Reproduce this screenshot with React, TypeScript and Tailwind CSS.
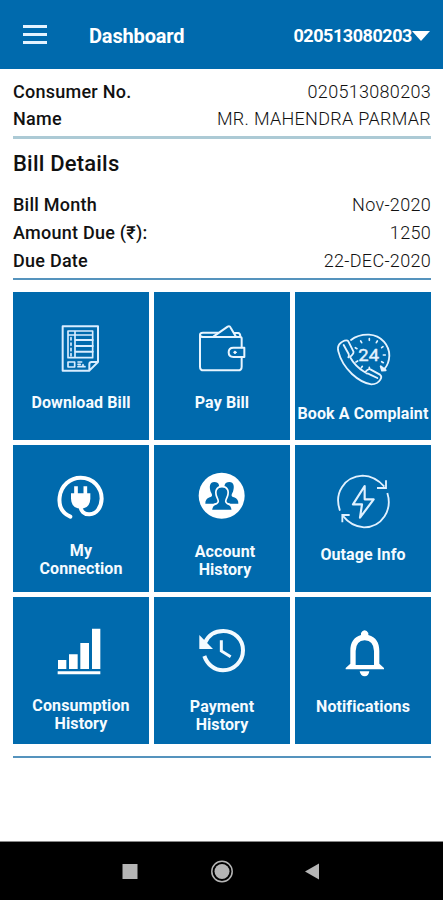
import React from "react";

type Tile = { lines: string[]; top: string; view: string; icon: React.ReactNode };

const stroke = { fill: "none", stroke: "#fff", strokeLinecap: "round", strokeLinejoin: "round" } as const;

const BillIcon = () => (
  <g {...stroke} strokeWidth={6} stroke="#d9edff">
    <path d="M158 115H264V222L238 248H158ZM264 222H245Q238 222 238 229V248" />
    <path d="M174 129H248V209H174ZM195 129V209M174 141H248" strokeWidth={5} />
    <path d="M197 156H248M197 174H248M197 191H248" strokeWidth={6} />
    <path d="M183 149V205" strokeWidth={5} strokeDasharray="7 9" />
    <path d="M174 222H194V237H174ZM204 222H215M204 229H211M204 236H225M219 230V236" strokeWidth={5} />
  </g>
);

const WalletIcon = () => (
  <g {...stroke} strokeWidth={6} stroke="#e8f5ff">
    <path d="M274 178V151Q274 147 268 147H160Q149 147 149 140Q149 134 158 134H203M149 140V236Q149 247 160 247H263Q274 247 274 236V207" />
    <path d="M190 145L232 116Q238 113 241 119L256 145M252 135H264Q270 136 270 146" />
    <path d="M282 179H249Q235 179 235 193Q235 207 249 207H282Z" />
    <circle cx="254" cy="193" r="3.5" fill="#fff" strokeWidth={3} />
  </g>
);

const SupportIcon = () => (
  <g {...stroke} strokeWidth={5.5} stroke="#e4f3ff">
    <path d="M178 156Q199 139 232 140C270 142 293 173 293 203Q292 226 279 242" />
    <path d="M267 235L271 248L282 247Z" fill="#e4f3ff" />
    <path d="M233 152V157M257 159L254 164M274 176L270 179M281 201H275M275 224L270 221M207 159L210 164M191 179L196 182M209 239L212 235M193 222L198 219M233 238V242" strokeWidth={5} />
    <path d="M164 157Q153 157 142 170Q137 177 140 190Q149 227 181 258Q210 285 239 289Q258 289 266 275Q272 265 265 260L236 244Q229 241 220 253Q190 235 175 207Q190 195 184 188L170 160Q168 157 164 157Z" />
    <path d="M156 171L171 198Q173 204 170 208M224 256Q229 256 234 259L257 270" />
    <text x="231" y="219" textAnchor="middle" fontSize="51" fill="#e4f3ff" stroke="#e4f3ff" strokeWidth="1.2" textLength="62" lengthAdjust="spacingAndGlyphs">24</text>
  </g>
);

const PlugIcon = () => (
  <g {...stroke}>
    <path d="M181 228C154 216 146 193 149 169C153 135 181 111 212 111C250 111 275 141 275 174C274 200 260 220 239 221C222 222 213 211 211 197" strokeWidth={12} />
    <path d="M198 137V164M226 137V164" strokeWidth={11} strokeLinecap="butt" />
    <path d="M183 158H241V174Q240 198 221 203H203Q184 198 183 174Z" fill="#fff" stroke="none" />
  </g>
);

const PeopleIcon = () => (
  <g>
    <circle cx="214" cy="165" r="69" fill="#fff" />
    <g fill="#006aad">
      <path d="M192 124C208 124 208 137 205 151C200 162 199 166 208 172L203 189H165Q164 175 178 170C188 167 186 162 181 153C176 138 178 124 192 124Z" />
      <path d="M237 124C221 124 221 137 224 151C229 162 230 166 221 172L226 189H264Q265 175 251 170C241 167 243 162 248 153C253 138 251 124 237 124Z" />
      <path stroke="#fff" strokeWidth="5" d="M215 138C232 138 237 151 231 168C225 181 224 184 231 189Q246 192 246 210H183Q183 192 199 189C206 184 205 181 199 168C193 151 198 138 215 138Z" />
    </g>
  </g>
);

const OutageIcon = () => (
  <g {...stroke} strokeWidth={5.5} stroke="#e0f1ff" strokeLinecap="butt" strokeLinejoin="miter">
    <path d="M145 210C126 157 158 108 213 105Q250 106 278 138" />
    <path d="M283 119V142H256" />
    <path d="M287 157C303 208 271 260 217 260Q179 258 153 225" />
    <path d="M152 245V223H174" />
    <path d="M219 136L184 191H211L205 231L246 176H219Z" strokeWidth={6.5} strokeLinejoin="round" />
  </g>
);

const BarsIcon = () => (
  <path fill="#fff" d="M144 203H169V230H144ZM177 186H203V230H177ZM211 152H237V230H211ZM246 109H271V230H246ZM143 237H271V246H143Z" />
);

const ClockBackIcon = () => (
  <g fill="none" stroke="#f2faff">
    <path d="M162 191C171 217 193 234 218 234C252 234 278 207 278 174C278 141 252 116 219 116C193 116 174 129 164 151" strokeWidth={12} />
    <path d="M147 128V170H188Z" fill="#f2faff" stroke="none" />
    <path d="M213 144V176L241 193" strokeWidth={9} />
  </g>
);

const BellIcon = () => (
  <g fill="#fff">
    <path fillRule="evenodd" d="M208 128V122Q212 114 219 114Q226 114 230 122V128C253 134 263 151 263 176V214L277 227V231H162V227L176 214V176C176 151 186 134 208 128ZM192 218H247V176Q246 145 219 144Q193 145 192 176Z" />
    <path d="M204 237H233Q231 252 219 252Q207 252 204 237Z" />
  </g>
);

const tiles: Tile[] = [
  { lines: ["Download Bill"], top: "mt-[11.500px]", view: "9 12 408 270", icon: <BillIcon /> },
  { lines: ["Pay Bill"], top: "mt-[11.500px]", view: "11 12 408 270", icon: <WalletIcon /> },
  { lines: ["Book A Complaint"], top: "mt-[22.500px]", view: "10 12 408 270", icon: <SupportIcon /> },
  { lines: ["My", "Connection"], top: "mt-[7px]", view: "9 13 408 270", icon: <PlugIcon /> },
  { lines: ["Account", "History"], top: "mt-[8px] pl-[6px]", view: "11 13 408 270", icon: <PeopleIcon /> },
  { lines: ["Outage Info"], top: "mt-[11px]", view: "10 13 408 270", icon: <OutageIcon /> },
  { lines: ["Consumption", "History"], top: "mt-[10px]", view: "9 14 408 270", icon: <BarsIcon /> },
  { lines: ["Payment", "History"], top: "mt-[11px]", view: "11 14 408 270", icon: <ClockBackIcon /> },
  { lines: ["Notifications"], top: "mt-[11px]", view: "10 14 408 270", icon: <BellIcon /> },
];

const Row = ({ label, value }: { label: string; value: string }) => (
  <div className="flex h-[27.8px] items-center justify-between whitespace-nowrap">
    <span className="text-[18px] font-medium tracking-[0.25px] text-[#111]">{label}</span>
    <span className="text-[18px] font-light tracking-[0.3px] text-[#111]">{value}</span>
  </div>
);

export default function App() {
  return (
    <div className="flex h-[900px] w-[443px] flex-col overflow-hidden bg-white font-[Roboto,sans-serif]">
      <header className="flex h-[69px] shrink-0 items-center bg-[#006aad] pt-[2px] pr-[13px] pl-[23px] text-white">
        <div className="flex w-[24px] flex-col gap-[5px] pb-[2px]">
          <div className="h-[3px] bg-[#e4f3ff]" />
          <div className="h-[3px] bg-[#e4f3ff]" />
          <div className="h-[3px] bg-[#e4f3ff]" />
        </div>
        <h1 className="ml-[42px] text-[20px] font-bold tracking-[-0.15px]">Dashboard</h1>
        <span className="ml-auto text-[18px] font-bold tracking-[-0.45px]">020513080203</span>
        <svg className="h-[10px] w-[18px]" viewBox="0 0 18 10"><path d="M0 0H18L9 10Z" fill="#fff" /></svg>
      </header>
      <main className="flex grow flex-col pr-[12px] pl-[13px]">
        <section className="flex flex-col pt-[8.2px]">
          <Row label="Consumer No." value="020513080203" />
          <Row label="Name" value="MR. MAHENDRA PARMAR" />
        </section>
        <div className="mt-[3.2px] h-[3px] shrink-0 bg-[#accad5]" />
        <section className="flex flex-col">
          <h2 className="mt-[9px] mb-[12px] text-[22px] leading-[31px] font-medium tracking-[0.2px] text-[#111]">Bill Details</h2>
          <Row label="Bill Month" value="Nov-2020" />
          <Row label="Amount Due (₹):" value="1250" />
          <Row label="Due Date" value="22-DEC-2020" />
        </section>
        <div className="mt-[4px] h-[2px] shrink-0 bg-[#5593bd]" />
        <div className="mt-[12px] grid grid-cols-3 gap-[5px]">
          {tiles.map((t) => (
            <div key={t.lines.join()} className="flex h-[147.3px] flex-col items-center bg-[#006aad]">
              <svg className="h-[90px] w-[136px] shrink-0 overflow-visible" viewBox={t.view}>{t.icon}</svg>
              <div className={`${t.top} text-center text-[16px] leading-[18px] font-bold tracking-[0.1px] whitespace-nowrap text-[#f5fbff]`}>
                {t.lines.map((l) => <div key={l}>{l}</div>)}
              </div>
            </div>
          ))}
        </div>
        <div className="mt-[12px] h-[2px] shrink-0 bg-[#5593bd]" />
      </main>
      <footer className="flex h-[59px] shrink-0 items-center justify-center border-t border-[#888] bg-black">
        <svg className="h-[24px] w-[200px]" viewBox="0 0 200 24" fill="#b5b5b5">
          <path d="M0.500 5H15.500V20H0.500Z" />
          <circle cx="100" cy="12.5" r="7.5" />
          <circle cx="100" cy="12.5" r="10.2" fill="none" stroke="#b5b5b5" strokeWidth="1.5" />
          <path d="M197 4.500V20.500L183 12.500Z" />
        </svg>
      </footer>
    </div>
  );
}
